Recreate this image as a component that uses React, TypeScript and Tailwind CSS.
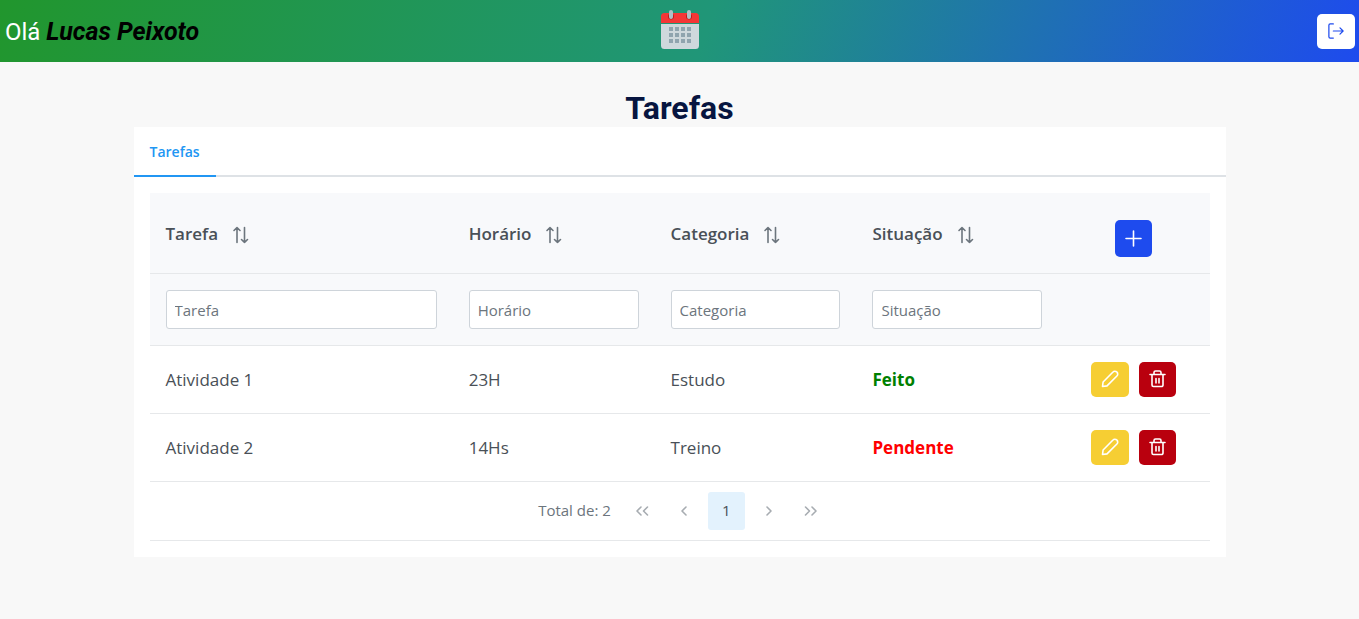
import { useState } from 'react';

type Status = 'Feito' | 'Pendente';

interface Task {
  id: number;
  name: string;
  time: string;
  category: string;
  status: Status;
}

const tasks: Task[] = [
  { id: 1, name: 'Atividade 1', time: '23H', category: 'Estudo', status: 'Feito' },
  { id: 2, name: 'Atividade 2', time: '14Hs', category: 'Treino', status: 'Pendente' },
];

const columns = [
  { label: 'Tarefa', key: 'name', width: 'w-[28.6%]' },
  { label: 'Horário', key: 'time', width: 'w-4/21' },
  { label: 'Categoria', key: 'category', width: 'w-4/21' },
  { label: 'Situação', key: 'status', width: 'w-4/21' },
] as const;

type ColumnKey = (typeof columns)[number]['key'];

const statusColor: Record<Status, string> = {
  Feito: 'text-[#008000]',
  Pendente: 'text-[#ff0000]',
};

function CalendarIcon() {
  return (
    <svg viewBox="0 0 40 42" className="h-[42px] w-10" aria-hidden="true">
      <path d="M1 14h38v21.5a3.5 3.5 0 0 1-3.5 3.5h-31A3.5 3.5 0 0 1 1 35.500z" fill="#cfd8dc" />
      <path d="M1 13V6.500A3.500 3.500 0 0 1 4.500 3h31A3.500 3.500 0 0 1 39 6.500V13z" fill="#f43636" />
      <circle cx="11" cy="6.500" r="3" fill="#b71c1c" />
      <circle cx="29" cy="6.500" r="3" fill="#b71c1c" />
      <rect x="9" y="0" width="4" height="9" rx="2" fill="#b0bec5" />
      <rect x="27" y="0" width="4" height="9" rx="2" fill="#b0bec5" />
      <path
        d="M9 17h4v4H9zM15 17h4v4h-4zM21 17h4v4h-4zM27 17h4v4h-4zM9 23h4v4H9zM15 23h4v4h-4zM21 23h4v4h-4zM27 23h4v4h-4zM9 29h4v4H9zM15 29h4v4h-4zM21 29h4v4h-4zM27 29h4v4h-4z"
        fill="#90a4ae"
      />
    </svg>
  );
}

interface IconProps {
  d: string;
  className: string;
  strokeWidth?: number;
}

function Icon({ d, className, strokeWidth = 1.6 }: IconProps) {
  return (
    <svg
      viewBox="0 0 18 18"
      className={className}
      fill="none"
      stroke="currentColor"
      strokeWidth={strokeWidth}
      strokeLinecap="round"
      strokeLinejoin="round"
      aria-hidden="true"
    >
      <path d={d} />
    </svg>
  );
}

const icons = {
  signOut: 'M6 1H2.500A1.500 1.500 0 0 0 1 2.500v13A1.500 1.500 0 0 0 2.500 17H6M6 9h11M13.500 5.500 17 9l-3.500 3.500',
  sort: 'M5 16.500v-15M2 4.500l3-3 3 3M12.500 1.500v15M9.500 13.500l3 3 3-3',
  plus: 'M8.500 1v15M1 8.500h15',
  pencil: 'M1.500 16.500l.6-4.500L12 2a2.200 2.200 0 0 1 1.600-.7c1.700 0 3.100 1.300 3.100 2.900 0 .7-.3 1.300-.8 1.800L6 15.900z',
  trash: 'M1 4.500h15M3 4.500v10.500A1.500 1.500 0 0 0 4.500 16.500h8A1.500 1.500 0 0 0 14 15V4.500M5 4.200V2.500A1.500 1.500 0 0 1 6.500 1h4A1.500 1.500 0 0 1 12 2.500v1.700M7 8.500v4.500M10 8.500v4.500',
  first: 'M8 5 4 9l4 4M14.500 5l-4 4 4 4',
  prev: 'M11 5 7 9l4 4',
  next: 'M8 5l4 4-4 4',
  last: 'M4.500 5l4 4-4 4M11 5l4 4-4 4',
};

const pageButton = 'flex h-[38px] w-[37px] items-center justify-center rounded-[3px]';

export default function App() {
  const [filters, setFilters] = useState<Record<ColumnKey, string>>({
    name: '',
    time: '',
    category: '',
    status: '',
  });
  const [sortKey, setSortKey] = useState<ColumnKey | null>(null);

  const rows = tasks.filter((task) =>
    columns.every(({ key }) => task[key].toLowerCase().includes(filters[key].toLowerCase())),
  );
  if (sortKey) rows.sort((a, b) => a[sortKey].localeCompare(b[sortKey]));

  return (
    <div className="min-h-screen bg-[#f8f8f8] font-['Segoe_UI','Open_Sans',sans-serif] text-[#495057]">
      <header className="grid h-[62px] grid-cols-[1fr_auto_1fr] items-center bg-[linear-gradient(110deg,#21962d_0%,#209678_52%,#1e4bee_100%)] pr-1 pl-[5px]">
        <p className="pt-0.5 font-[Roboto,sans-serif] text-2xl text-white">
          Olá <strong className="text-[25px] font-bold text-black italic">Lucas Peixoto</strong>
        </p>
        <CalendarIcon />
        <button
          type="button"
          aria-label="Sair"
          className="flex h-[35px] w-[38px] items-center justify-center justify-self-end rounded-[5px] bg-white text-[#1e4bee]"
        >
          <Icon d={icons.signOut} className="size-4" strokeWidth={1.4} />
        </button>
      </header>

      <main className="mx-auto max-w-[1092px] pt-[26px]">
        <h1 className="pt-px text-center font-[Roboto,sans-serif] text-[32px] leading-[38px] font-bold text-[#071540]">
          Tarefas
        </h1>

        <section className="bg-white">
          <div role="tablist" className="flex border-b-2 border-[#dee2e6]">
            <button
              type="button"
              role="tab"
              aria-selected="true"
              className="-mb-0.5 h-[50px] border-b-2 border-[#2196f3] px-4 pt-0.5 text-sm font-semibold text-[#2196f3]"
            >
              Tarefas
            </button>
          </div>

          <div role="tabpanel" className="p-4">
            <table className="w-full table-fixed border-collapse text-left text-[17px] leading-6">
              <thead className="bg-[#f8f9fb]">
                <tr className="h-20 border-b border-[#e6e8ea]">
                  {columns.map(({ label, key, width }) => (
                    <th key={key} scope="col" className={`${width} px-4 pt-0.5 font-semibold`}>
                      <button type="button" onClick={() => setSortKey(key)} className="flex items-center gap-3.5">
                        {label}
                        <Icon d={icons.sort} className="mt-0.5 size-[18px] text-[#6c757d]" />
                      </button>
                    </th>
                  ))}
                  <th scope="col" className="pt-3">
                    <button
                      type="button"
                      aria-label="Adicionar"
                      className="mx-auto flex size-[37px] items-center justify-center rounded-[5px] bg-[#1e4bee] text-white"
                    >
                      <Icon d={icons.plus} className="size-[18px]" />
                    </button>
                  </th>
                </tr>
                <tr className="h-[72px] border-b border-[#e6e8ea]">
                  {columns.map(({ label, key }) => (
                    <th key={key} className="px-4 font-normal">
                      <input
                        type="text"
                        aria-label={label}
                        placeholder={label}
                        value={filters[key]}
                        onChange={(event) => setFilters({ ...filters, [key]: event.target.value })}
                        className="block h-[39px] w-full rounded-[3px] border border-[#ced4da] bg-white px-2 pt-0.5 text-[15px] placeholder:text-[#6c757d]"
                      />
                    </th>
                  ))}
                  <td />
                </tr>
              </thead>
              <tbody>
                {rows.map((task) => (
                  <tr key={task.id} className="h-[68px] border-b border-[#e6e8ea]">
                    <td className="px-4 pt-0.5">{task.name}</td>
                    <td className="px-4 pt-0.5">{task.time}</td>
                    <td className="px-4 pt-0.5">{task.category}</td>
                    <td className={`px-4 pt-0.5 font-bold ${statusColor[task.status]}`}>{task.status}</td>
                    <td>
                      <div className="flex justify-center gap-2.5">
                        <button
                          type="button"
                          aria-label={`Editar ${task.name}`}
                          className="flex h-[35px] w-[38px] items-center justify-center rounded-[5px] bg-[#f6ce33] text-white"
                        >
                          <Icon d={icons.pencil} className="size-[18px]" />
                        </button>
                        <button
                          type="button"
                          aria-label={`Excluir ${task.name}`}
                          className="flex h-[35px] w-[37px] items-center justify-center rounded-[5px] bg-[#b9000e] text-white"
                        >
                          <Icon d={icons.trash} className="size-[18px]" />
                        </button>
                      </div>
                    </td>
                  </tr>
                ))}
              </tbody>
            </table>

            <nav
              aria-label="Paginação"
              className="flex h-[59px] items-center justify-center gap-[5px] border-b border-[#e6e8ea] pl-2 text-[15px] text-[#6c757d]"
            >
              <span className="mr-2">Total de: {rows.length}</span>
              <button type="button" disabled aria-label="Primeira página" className={`${pageButton} text-[#a7acb1]`}>
                <Icon d={icons.first} className="size-[18px]" />
              </button>
              <button type="button" disabled aria-label="Página anterior" className={`${pageButton} text-[#a7acb1]`}>
                <Icon d={icons.prev} className="size-[18px]" />
              </button>
              <button type="button" aria-current="page" className={`${pageButton} bg-[#e3f2fd] text-[#495057]`}>
                1
              </button>
              <button type="button" disabled aria-label="Próxima página" className={`${pageButton} text-[#a7acb1]`}>
                <Icon d={icons.next} className="size-[18px]" />
              </button>
              <button type="button" disabled aria-label="Última página" className={`${pageButton} text-[#a7acb1]`}>
                <Icon d={icons.last} className="size-[18px]" />
              </button>
            </nav>
          </div>
        </section>
      </main>
    </div>
  );
}
